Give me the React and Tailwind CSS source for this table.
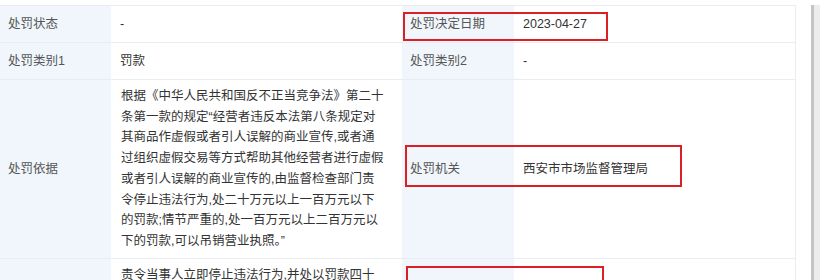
import React from 'react';

const FONT = { fontFamily: '"Liberation Sans", "Noto Sans CJK SC", sans-serif' };

const basisLines = [
  '根据《中华人民共和国反不正当竞争法》第二十',
  '条第一款的规定“经营者违反本法第八条规定对',
  '其商品作虚假或者引人误解的商业宣传,或者通',
  '过组织虚假交易等方式帮助其他经营者进行虚假',
  '或者引人误解的商业宣传的,由监督检查部门责',
  '令停止违法行为,处二十万元以上一百万元以下',
  '的罚款;情节严重的,处一百万元以上二百万元以',
  '下的罚款,可以吊销营业执照。”',
];

function Label({ children }) {
  return (
    <div className="bg-[#f0f6fc] pl-[8px] flex items-center text-[#555]">{children}</div>
  );
}

function Value({ children, className = '' }) {
  return (
    <div className={'pl-[9px] flex items-center text-[#333] ' + className}>{children}</div>
  );
}

function Row({ children, className = '' }) {
  return (
    <div className={'grid grid-cols-[111px_291px_112px_281px] border-b border-[#e9edf2] ' + className}>
      {children}
    </div>
  );
}

export default function App() {
  return (
    <div className="relative w-[820px] h-[280px] overflow-hidden bg-white text-[12.5px]" style={FONT}>
      <div className="flex pt-[5px]">
        <div className="w-[796px] border-t border-r border-[#e9edf2]">
          <Row className="h-[37px]">
            <Label>处罚状态</Label>
            <Value>-</Value>
            <Label>处罚决定日期</Label>
            <Value>2023-04-27</Value>
          </Row>
          <Row className="h-[37px]">
            <Label>处罚类别1</Label>
            <Value>罚款</Value>
            <Label>处罚类别2</Label>
            <Value>-</Value>
          </Row>
          <Row className="h-[179px]">
            <Label>处罚依据</Label>
            <div className="pl-[10px] py-[6px] leading-[20.7px] text-[#333] whitespace-nowrap">
              {basisLines.map((l, i) => (
                <div key={i}>{l}</div>
              ))}
            </div>
            <Label>处罚机关</Label>
            <Value>西安市市场监督管理局</Value>
          </Row>
          <Row className="h-[140px]">
            <Label>处罚内容</Label>
            <div className="pl-[10px] py-[6px] leading-[20.7px] text-[#333] whitespace-nowrap">
              <div>责令当事人立即停止违法行为,并处以罚款四十</div>
              <div>万元。</div>
            </div>
            <Label>处罚结果</Label>
            <Value>已结案</Value>
          </Row>
        </div>
        <div className="ml-[15px] w-[9px] h-[280px] flex">
          <div className="w-[3px] bg-[#c4c4c4]" />
          <div className="flex-1 bg-[#ececec]" />
        </div>
      </div>

      {/* annotation boxes */}
      <div className="absolute left-[403px] top-[12px] w-[205px] h-[29px] border-2 border-[#dc1f26]" />
      <div className="absolute left-[405px] top-[145px] w-[277px] h-[42px] border-2 border-[#dc1f26]" />
      <div className="absolute left-[406px] top-[266px] w-[198px] h-[40px] border-2 border-[#dc1f26]" />
    </div>
  );
}
